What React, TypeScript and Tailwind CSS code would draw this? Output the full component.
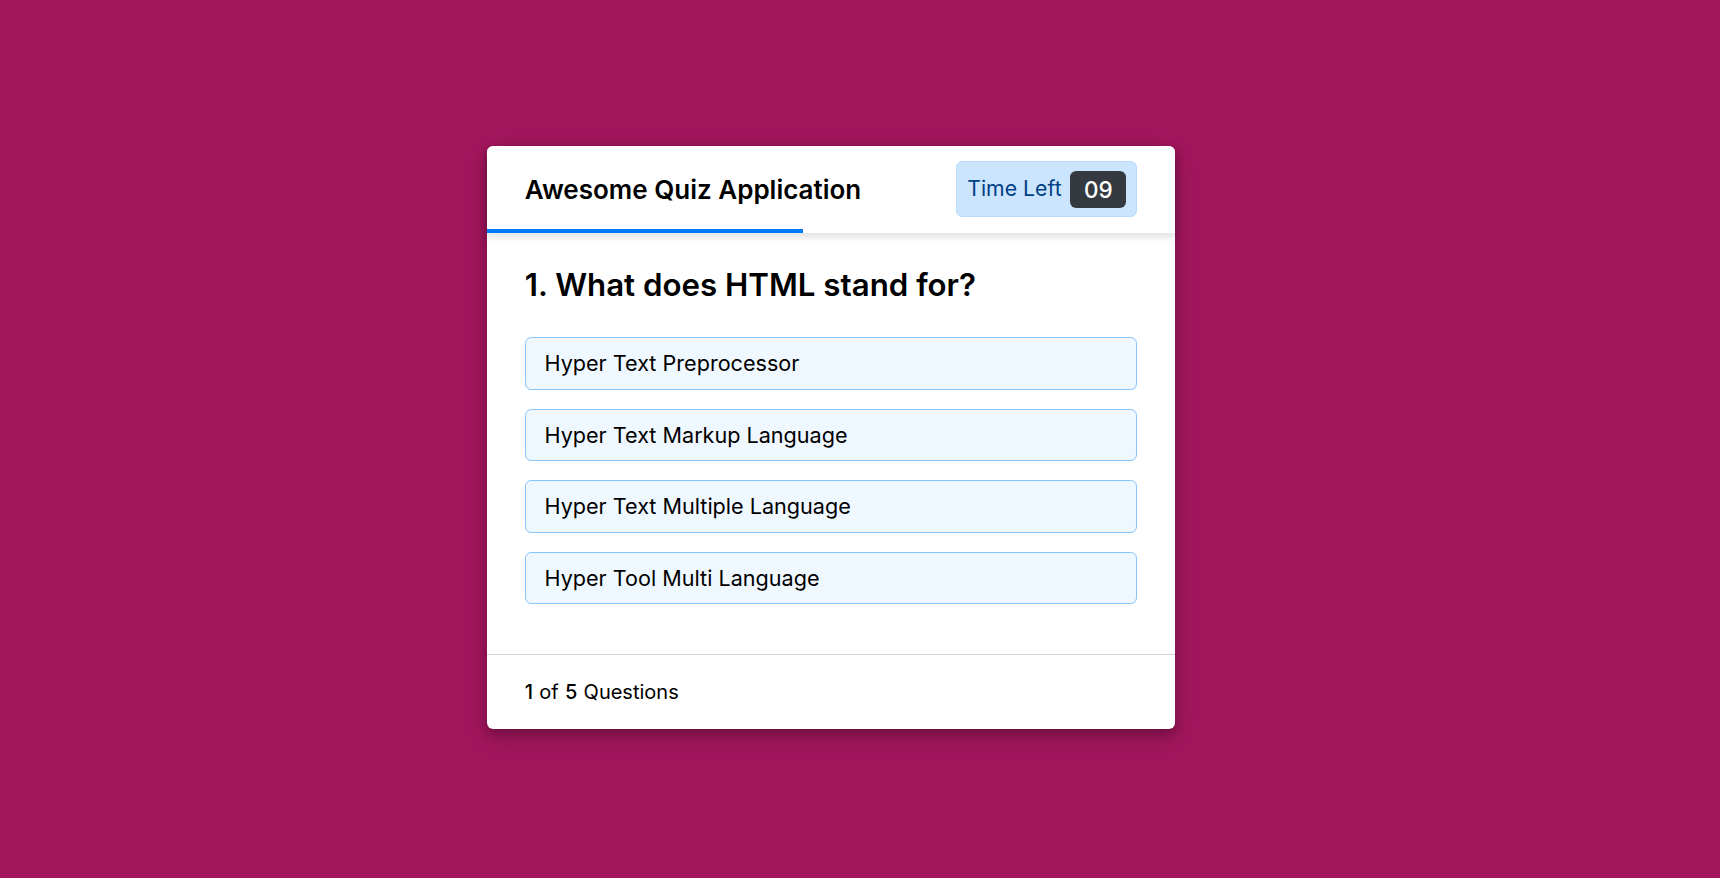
const options = [
  "Hyper Text Preprocessor",
  "Hyper Text Markup Language",
  "Hyper Text Multiple Language",
  "Hyper Tool Multi Language",
];

export default function App() {
  return (
    <div className="h-screen flex items-center justify-center pr-[58px] pb-[3px] bg-[#a2165e] font-['Inter','Noto_Sans',sans-serif] text-black">
      <div className="w-[687.5px] bg-white rounded-[6.25px] shadow-[0_5px_10px_0_rgba(0,0,0,0.2),0_7.5px_25px_0_rgba(0,0,0,0.19)]">
        <header className="relative z-10 h-[87.5px] px-[37.5px] flex items-center justify-between rounded-t-[6.25px] bg-white shadow-[0_3.75px_6.25px_1.25px_rgba(0,0,0,0.1)]">
          <div className="text-[26px] font-semibold">Awesome Quiz Application</div>
          <div className="w-[181px] h-[56px] px-[10px] flex items-center justify-between bg-[#cce5ff] border border-[#b8daff] rounded-[6.25px]">
            <span className="text-[21.25px] text-[#004085]">Time Left</span>
            <span className="w-[56px] h-[37.5px] leading-[37.5px] text-center text-[22.5px] font-medium text-white bg-[#343a40] rounded-[6.25px]">09</span>
          </div>
          <div className="absolute left-0 bottom-0 h-[4px] w-[316px] bg-[#007bff]" />
        </header>

        <section className="pt-[31.25px] px-[37.5px] pb-[50px]">
          <div className="text-[31.25px] leading-[1.4] font-semibold">1. What does HTML stand for?</div>
          <div className="mt-[29px] flex flex-col gap-[18.75px]">
            {options.map((o) => (
              <div key={o} className="bg-[#f0f8ff] border border-[#84c5fe] rounded-[6.25px] px-[18.75px] py-[10px] text-[21.6px] leading-[30.75px]">
                {o}
              </div>
            ))}
          </div>
        </section>

        <footer className="h-[75px] px-[37.5px] flex items-center border-t border-[#d3d3d3] text-[20px]">
          <span className="font-medium pr-[6.25px]">1</span>
          <span>of</span>
          <span className="font-medium px-[6.25px]">5</span>
          <span>Questions</span>
        </footer>
      </div>
    </div>
  );
}
